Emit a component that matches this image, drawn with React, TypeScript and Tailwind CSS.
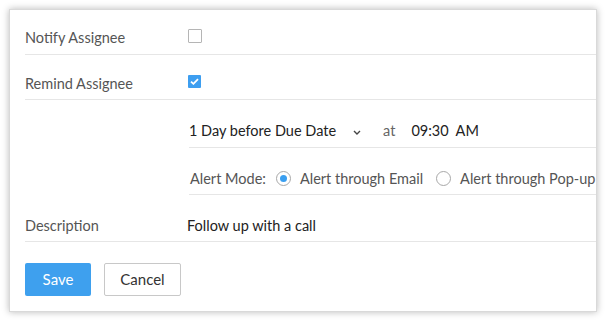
import React from "react";

const font = { fontFamily: "Lato, 'Open Sans', sans-serif" };

const Checkbox = ({ checked }: { checked?: boolean }) =>
  checked ? (
    <span className="flex h-[13px] w-[13px] items-center justify-center rounded-[1px] bg-[#3d9ef0]">
      <svg width="9" height="7" viewBox="0 0 9 7">
        <path d="M1 3.6 L3.4 5.8 L8 1.2" fill="none" stroke="#fff" strokeWidth="1.8" />
      </svg>
    </span>
  ) : (
    <span className="block h-[14px] w-[14px] rounded-[1px] border border-[#b5b5b5] bg-white" />
  );

const Radio = ({ checked }: { checked?: boolean }) => (
  <span className="flex h-[15px] w-[15px] shrink-0 items-center justify-center rounded-full border border-[#a8a8a8] bg-white">
    {checked && <span className="block h-[7px] w-[7px] rounded-full bg-[#3a9ff0]" />}
  </span>
);

export default function App() {
  return (
    <div className="min-h-[321px] w-[607px] bg-white pl-[9px] pt-[9px] text-[14.5px]" style={font}>
      <div className="w-[588px] border border-[#d9d9d9] bg-white pb-[15px] shadow-[0_0_7px_rgba(0,0,0,0.28)]">
        {/* notify */}
        <div className="ml-[15px] flex h-[45px] items-end border-b border-[#e6e6e6] pb-[6px]">
          <span className="w-[163px] leading-5 text-[#555]">Notify Assignee</span>
          <span className="mb-[5px]">
            <Checkbox />
          </span>
        </div>
        {/* remind */}
        <div className="ml-[15px] flex h-[45px] items-end border-b border-[#e6e6e6] pb-[5px]">
          <span className="w-[163px] leading-5 text-[#555]">Remind Assignee</span>
          <span className="mb-[6px]">
            <Checkbox checked />
          </span>
        </div>
        {/* due */}
        <div className="ml-[179px] flex h-[48px] items-end whitespace-nowrap border-b border-[#e6e6e6] pb-[6px] leading-5">
          <span className="text-[#222]">1 Day before Due Date</span>
          <svg className="mb-[6px] ml-[17px]" width="8" height="5" viewBox="0 0 8 5">
            <path d="M1 1 L4 4 L7 1" fill="none" stroke="#444" strokeWidth="1.4" />
          </svg>
          <span className="ml-[22px] text-[#666]">at</span>
          <span className="ml-[16px] text-[#222]">09:30&nbsp;&nbsp;AM</span>
        </div>
        {/* alert */}
        <div className="ml-[179px] flex h-[47px] items-end whitespace-nowrap border-b border-[#e6e6e6] pb-[5px] leading-5 text-[#555]">
          <span className="ml-[1px]">Alert Mode:</span>
          <span className="mb-[3px] ml-[10px]">
            <Radio checked />
          </span>
          <span className="ml-[9px]">Alert through Email</span>
          <span className="mb-[3px] ml-[13px]">
            <Radio />
          </span>
          <span className="ml-[9px]">Alert through Pop-up</span>
        </div>
        {/* description */}
        <div className="ml-[15px] flex h-[47px] items-end border-b border-[#e6e6e6] pb-[5px] leading-5">
          <span className="w-[162px] text-[#555]">Description</span>
          <span className="text-[#222]">Follow up with a call</span>
        </div>
        <div className="ml-[15px] mt-[21px] flex gap-[13px] text-[15px]">
          <button className="h-[33px] w-[66px] rounded-[2px] bg-[#3ea0ee] text-white">Save</button>
          <button className="h-[33px] w-[77px] rounded-[2px] border border-[#c8c8c8] bg-white text-[#333]">
            Cancel
          </button>
        </div>
      </div>
    </div>
  );
}
